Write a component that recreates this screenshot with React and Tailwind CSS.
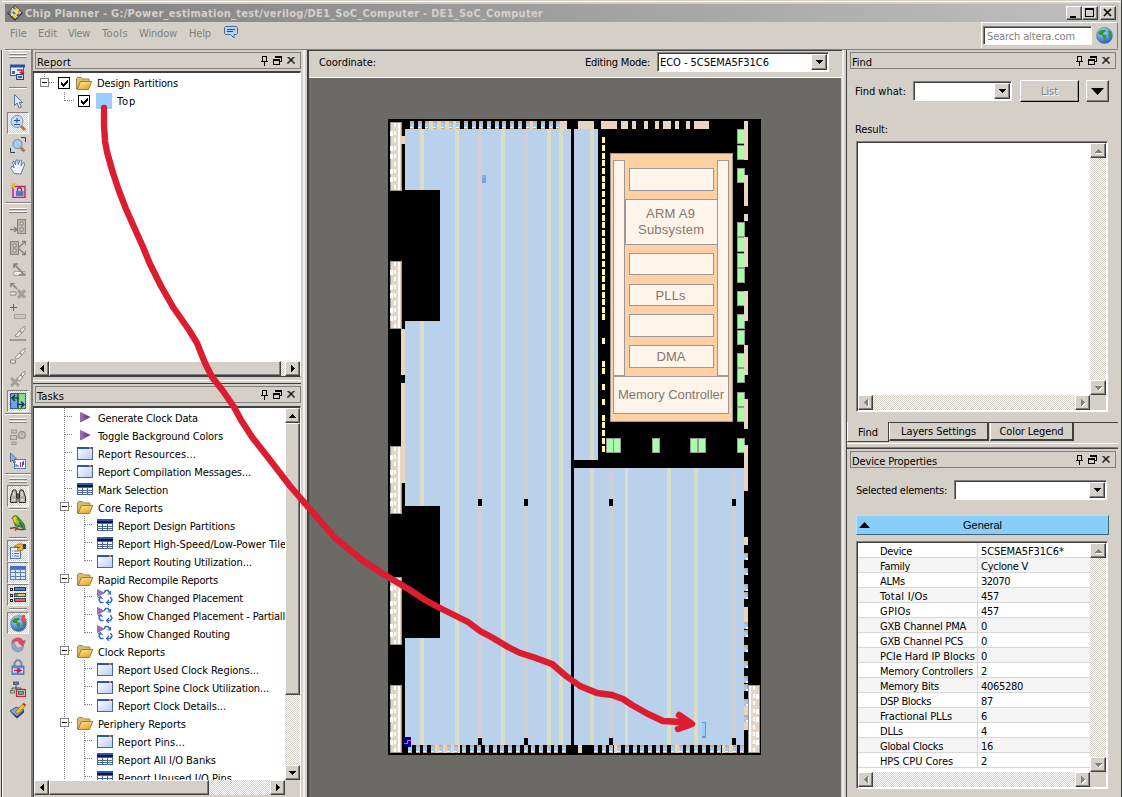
import React, { useLayoutEffect, useRef, useState } from "react";

/* Text run whose tracking is adjusted so that it spans w pixels. */
function Fit({ w, className = "", children }) {
  const ref = useRef(null);
  const [ls, setLs] = useState(0);
  useLayoutEffect(() => {
    const n = String(children).length;
    const natural = ref.current.getBoundingClientRect().width;
    if (w) setLs((w - natural) / n);
  }, [w, children]);
  return (
    <span ref={ref} className={"inline-block shrink-0 whitespace-pre " + className} style={{ letterSpacing: ls + "px" }}>
      {children}
    </span>
  );
}

const RAISED = "border border-t-white border-l-white border-r-[#404040] border-b-[#404040] shadow-[inset_-1px_-1px_#808080] bg-[#d4d0c8]";
const SUNKEN = "border border-t-[#808080] border-l-[#808080] border-r-white border-b-white";
const CHECKER = "bg-[repeating-conic-gradient(#ffffff_0_25%,#d4d0c8_0_50%)] bg-[length:2px_2px]";

function Arrow({ dir, off }) {
  const d = { up: "M0 4h7L3.5 0z", down: "M0 0h7L3.5 4z", left: "M4 0v7L0 3.5z", right: "M0 0v7l4-3.5z" }[dir];
  const v = dir === "up" || dir === "down";
  return (
    <svg width={v ? 7 : 4} height={v ? 4 : 7} className="overflow-visible" shapeRendering="crispEdges">
      {off && <path d={d} fill="#fff" transform="translate(1 1)" />}
      <path d={d} fill={off ? "#808080" : "#000"} />
    </svg>
  );
}

function SBtn({ dir, off, className = "" }) {
  return (
    <div className={"flex shrink-0 items-center justify-center w-[15px] h-[15px] " + RAISED + " " + className}>
      <Arrow dir={dir} off={off} />
    </div>
  );
}

function PanelTitle({ children, w, className = "" }) {
  return (
    <div className={"flex shrink-0 items-center h-[17px] border border-[#808080] pl-px pr-[5px] " + className}>
      <Fit w={w} className="pt-[3px]">{children}</Fit>
      <svg width="34" height="11" className="ml-auto" fill="none" stroke="#000" shapeRendering="crispEdges">
        <path d="M1.5 6V1.5h4V6M0 6.5h7M3.5 7v4" />
        <path d="M14.500 3V1.500h6v5H19M14 2h7M12.500 4.500h6v5h-6zM12 5h7" />
        <path d="M26.500 2l7 7M33.500 2l-7 7M27.500 2l6 6M32.500 2l-6 6" shapeRendering="auto" />
      </svg>
    </div>
  );
}

/* ---------- small icons ---------- */
const Folder = () => (
  <svg width="16" height="13" viewBox="0 0 16 13">
    <defs><linearGradient id="fo" x1="0" y1="0" x2=".6" y2="1"><stop offset="0" stopColor="#ffe9a0" /><stop offset="1" stopColor="#e8a828" /></linearGradient></defs>
    <path d="M.5 12V2l1-1.500h4L7 2h6v3" fill="#dcc068" stroke="#98875a" />
    <path d="M1 12.500L4.500 4.500H15.800L12.500 12.500z" fill="url(#fo)" stroke="#8a6a20" strokeWidth=".8" />
  </svg>
);
const Sheet = () => (
  <svg width="16" height="13" viewBox="0 0 16 13">
    <defs><linearGradient id="sh" x1="0" y1="0" x2="1" y2="1"><stop offset="0" stopColor="#fff" /><stop offset="1" stopColor="#b9cbf2" /></linearGradient></defs>
    <rect x=".5" y=".5" width="15" height="12" fill="url(#sh)" stroke="#4867a0" />
    <path d="M0 1h16" stroke="#2a55b8" strokeWidth="2" /><rect x="12" width="2" height="2" fill="#f07818" />
  </svg>
);
const Table = () => (
  <svg width="16" height="12" viewBox="0 0 16 12" shapeRendering="crispEdges">
    <rect width="16" height="12" fill="#4a6694" /><rect y="0" width="16" height="2" fill="#2858b8" /><rect y="2" width="16" height="2" fill="#101838" />
    <path d="M1 5h4v2H1zM6 5h4v2H6zM11 5h4v2h-4zM1 8h4v1H1zM6 8h4v1H6zM11 8h4v1h-4zM1 10h4v1H1zM6 10h4v1H6zM11 10h4v1h-4z" fill="#eef3ff" />
  </svg>
);
const Play = () => (
  <svg width="16" height="13" viewBox="0 0 16 13">
    <defs><linearGradient id="pl"><stop offset="0" stopColor="#b46ac4" /><stop offset="1" stopColor="#4a2870" /></linearGradient></defs>
    <path d="M3.500 1.500L13 6 3.500 11z" fill="url(#pl)" stroke="#70508a" strokeWidth=".7" />
  </svg>
);
const Recycle = () => (
  <svg width="16" height="16" viewBox="0 0 16 16" fill="none" stroke="#3868c8" strokeWidth="1.500">
    <path d="M7 4l1.500-2.500h2.500L13 4.500M13.500 8l1.500 3-1.500 2.500H10M6.500 13.500H3.500L2 11l1.500-3" />
    <path d="M10.500 5h3V2M12 11l-2.500 2.500L12 16M1 9l2.500-1.500L5.500 10" strokeWidth="1.200" />
    <path d="M.5.500L7 4 .5 7.500z" fill="#a070b8" stroke="#705088" strokeWidth=".6" />
  </svg>
);
const ICONS = { folder: Folder, sheet: Sheet, table: Table, play: Play, recycle: Recycle };

const Globe = () => (
  <svg width="17" height="17" viewBox="0 0 17 17">
    <defs><radialGradient id="gl" cx=".4" cy=".25" r=".8"><stop offset="0" stopColor="#c4dcfa" /><stop offset=".6" stopColor="#5e8ede" /><stop offset="1" stopColor="#2a4fa8" /></radialGradient></defs>
    <circle cx="8.500" cy="8.500" r="8" fill="url(#gl)" stroke="#5578b0" strokeWidth=".6" />
    <path d="M2 5.500l3-2.500 4-.5 1 2-2.500 1.500L7 8 3.500 8zM6 7.500h3.500l1 2-1.500 2.500-.5 2.500-1.500-3.500zM11.500 4l2-.5 2 3 .3 2.500-1.800 2-1.500-2.500.5-2z" fill="#2f9838" />
  </svg>
);

/* ---------- left tool bar ---------- */
const G = "#858279";
const tb = {
  report: <g><rect x=".5" y="2.500" width="13" height="9" fill="#e8eefc" stroke="#4060a0" /><path d="M0 2h15" stroke="#2850a8" strokeWidth="3" /><path d="M2 7h3v3H2z" fill="#606878" /><path d="M7 6h5v3M10 8l2 2 2-2" stroke="#d01850" strokeWidth="1.500" fill="none" /><rect x="6.500" y="10.500" width="7" height="5" fill="#c8d8f8" stroke="#304880" /><path d="M8 13h4" stroke="#506080" strokeWidth="2" /></g>,
  cursor: <path d="M4.500 1.500v11l2.500-2.500 2.200 5 2.300-1-2.300-4.500h3.500z" fill="#dce8fc" stroke="#5872a0" />,
  zoom: <g><path d="M10.500 10.500l4.500 4.500" stroke="#b87830" strokeWidth="3" /><circle cx="7" cy="6.500" r="6" fill="#c4dcf8" stroke="#7890b8" /><path d="M4 5.500h6M7 3v5M4 9.500h6" stroke="#284880" /></g>,
  fit: <g><path d="M10.500 10.500l4 4" stroke="#b87830" strokeWidth="3" /><circle cx="7.500" cy="7" r="4.500" fill="#a8ccf4" stroke="#6888b0" /><path d="M11 .5h4.500V5M5 15.500H.5V11" stroke="#304060" fill="none" /></g>,
  hand: <path d="M4 14.500L1 9.500l.5-2 1.500 0 1.200 1.500L2.500 3l1.500-.8L5.500 6 6 1l1.800 0L8.200 5.500 10 1l1.600.6L11 7l2.500-3.500 1.500 1L12.500 11l-1.500 4z" fill="#f4f8ff" stroke="#5c7cb0" />,
  lock: <g><rect x="3" y="4.500" width="12" height="11" fill="#d8c8e4" stroke="#d02060" strokeWidth="1.500" /><path d="M7.500 9V7q2-2.500 4 0v2" fill="none" stroke="#4050a0" strokeWidth="1.300" /><rect x="6" y="9" width="7.500" height="5" fill="#5878c0" /><path d="M7 11.500h5" stroke="#e83060" /><path d="M3.500 0v7M0 3.500h7M1 1l5 5M6 1L1 6" stroke="#f0b810" /></g>,
  g1: <g stroke={G} fill="#e8e5de"><rect x="7.500" y=".5" width="8" height="14" fill="#bdb9b0" /><path d="M10 3h3v3h-3zM10 9h3v3h-3z" /><path d="M0 10.500h7M4 8l3 2.500L4 13" fill="none" strokeWidth="1.500" /></g>,
  g2: <g stroke={G} fill="#e8e5de"><rect x=".5" y="1.500" width="8" height="13" fill="#bdb9b0" /><path d="M3 4h3v3H3zM3 9h3v3H3z" /><path d="M9 7l6-5M9 9l6 5M12 1.500h3.500V5M12 14.500h3.500V11" fill="none" strokeWidth="1.300" /></g>,
  g3: <g><path d="M4 10.500h11v4H4z" fill="#f0eee8" stroke="#a4a198" /><path d="M4 3l10 10.500H9M4 7V3h4" stroke={G} strokeWidth="1.700" fill="none" /></g>,
  g4: <g><path d="M0 9h6v3H0z" fill="#f0eee8" stroke={G} /><path d="M1 0l6 6M1 4V0h4" stroke={G} strokeWidth="1.500" fill="none" /><path d="M8 7l7 8M15 7l-7 8" stroke="#a4a198" strokeWidth="3" /></g>,
  g5: <g><path d="M3.500 0v7M0 3.500h7" stroke="#66645e" /><path d="M4.500 10.500h11v4h-11z" fill="#c9c6be" stroke="#a4a198" /></g>,
  g6: <g><path d="M0 14h16" stroke={G} strokeWidth="2" /><path d="M1 14h14" stroke="#d8d4cc" strokeWidth=".6" /><path d="M5 10l4-5 3 2-4 4zM10 4l5-4v3l-3 4z" fill="#e8e5de" stroke={G} strokeWidth=".8" /></g>,
  g7: <g><path d="M.5 12h5v3h-5z" fill="#eee" stroke={G} /><path d="M5 10l4-5 3 2-4 4zM10 4l5-4v3l-3 4z" fill="#e8e5de" stroke={G} strokeWidth=".8" /></g>,
  g8: <g><path d="M1 7l8 8M9 7l-8 8" stroke="#a4a198" strokeWidth="3" /><path d="M7 8l3-4 3 2-3 4zM11 3l4-3v3l-3 3z" fill="#e8e5de" stroke={G} strokeWidth=".8" /></g>,
  swap: <g><rect x=".5" y=".5" width="7" height="15" fill="#70a0e8" stroke="#305898" /><rect x="8.500" y=".5" width="7" height="15" fill="#90d890" stroke="#308038" /><path d="M9 5H3M5 2L2 5l3 3" stroke="#105018" strokeWidth="1.500" fill="none" /><path d="M7 11.500h6M11 8.500l3 3-3 3" stroke="#102888" strokeWidth="1.500" fill="none" /></g>,
  clk: <g fill="#c8c4bc" stroke="#9a978e"><rect x="1.500" y="1" width="5" height="3" /><rect x=".5" y="6.500" width="6" height="4" /><rect x="2" y="13" width="4" height="2.500" /><path d="M7 8.500h2" /><circle cx="12" cy="6" r="3.500" strokeWidth="1.500" /><path d="M12 4v2.500" /></g>,
  chart: <g><rect x="4.500" y="6.500" width="11" height="9" fill="#f4f8ff" stroke="#5878b0" /><path d="M6 14v-3M8 14v-2M12.500 14V9" stroke="#2858c0" /><path d="M7 13v-1M10.500 14V9M13.500 12V8" stroke="#d02858" /><path d="M.5 0v9l2-2 1.500 3 1.500-.8L4 6.500h3z" fill="#90b0dc" stroke="#385888" strokeWidth=".8" /></g>,
  bino: <g fill="#b0b0ac" stroke="#303030"><path d="M3 2h3l1 5v7.500H.5V9z" /><path d="M10 2h3l2.500 7v5.500H9V7z" /><path d="M6.500 6h3v4h-3z" fill="#606060" /><path d="M2 12h3M11 12h3M4 4v4M12 4v4" stroke="#eee" /></g>,
  bird: <g><path d="M3 1.500l3-1 3 2.500 5 6 1.500 6-5-3-5-1-2-5z" fill="#48982c" stroke="#285810" strokeWidth=".7" /><path d="M3 3l2-2 2 2-1 5-2-1z" fill="#f0c820" /><path d="M7 4l3 4-2 2-3-2z" fill="#8cc83c" /><path d="M1 3.500l2-1v2z" fill="#c04818" /><path d="M0 13.500l5-1 4 2h5M5 15.500l3-3" stroke="#7a4424" strokeWidth="1.500" fill="none" /><path d="M9 7l4 5" stroke="#204888" /></g>,
  prop: <g><rect x=".5" y="4.500" width="10" height="11" fill="#eaf2ff" stroke="#5878b0" /><path d="M2 8h1M4 8h5M2 10.500h1M4 10.500h5M2 13h1M4 13h5" stroke="#4870c0" /><path d="M4 3.500L8 1h5v6L9 8 7 6l3-2z" fill="#f0b830" stroke="#8a6010" strokeWidth=".7" /><rect x="13" y="1" width="3" height="5" fill="#203c98" /></g>,
  grid: <g shapeRendering="crispEdges"><rect y="1" width="16" height="14" fill="#6080b0" /><rect y="1" width="16" height="3" fill="#4870c0" /><path d="M1 5h4v2H1zM6 5h4v2H6zM11 5h4v2h-4zM1 8h4v3H1zM6 8h4v3H6zM11 8h4v3h-4zM1 12h4v2H1zM6 12h4v2H6zM11 12h4v2h-4z" fill="#dce8fc" /></g>,
  legend: <g shapeRendering="crispEdges"><path d="M0 1h3v3H0zM0 7h3v3H0zM0 12h3v3H0z" fill="#202020" /><path d="M1 2h1v1H1zM1 8h1v1H1zM1 13h1v1H1z" fill="#fff" /><rect x="4.500" y=".5" width="11" height="3" fill="#5080d8" stroke="#183878" /><rect x="4.500" y="6.500" width="11" height="3" fill="#e8d040" stroke="#404860" /><rect x="4.500" y="11.500" width="11" height="3" fill="#f05868" stroke="#404860" /><path d="M5 8h3" stroke="#48a848" strokeWidth="2" /></g>,
  swirl: <g><path d="M1.500 7Q2 .8 8.500.8 12 1 13 4l2.500-.5-2.500 6L8 5.500l2.200-.4Q7.500 3 5 4.500 2.500 5 1.500 7z" fill="#e04868" stroke="#b03050" strokeWidth=".4" /><path d="M2 6.500Q3 4.500 4.500 6q.5 4 4 5 3.500-.5 5-2Q13 14.800 7.500 15 1 14 2 6.500z" fill="#90a8c8" stroke="#6078a0" strokeWidth=".5" /></g>,
  padlock: <g><path d="M4.500 7V4q3.500-6 7 0v3" stroke="#7088b0" strokeWidth="2" fill="none" /><rect x="2" y="7" width="12" height="9" fill="#6c90d8" stroke="#405c98" strokeWidth=".7" /><rect x="3" y="9.500" width="10" height="4" fill="#f8e8f0" /><path d="M4 11.500h5M7 9.500l4 2-4 2" stroke="#c81848" strokeWidth="1.500" fill="none" /></g>,
  tree: <g><path d="M6 4v5M2 7h9M2 7v2M11 7v2" stroke="#405070" fill="none" /><rect x="3.500" y="1" width="5" height="2.500" fill="#5080c0" stroke="#304870" strokeWidth=".7" /><rect x=".5" y="9.500" width="4" height="2.500" fill="#c8d060" stroke="#506040" strokeWidth=".7" /><rect x="6.500" y="8.500" width="9" height="7" fill="none" stroke="#d81840" strokeWidth="1.300" /><rect x="8.500" y="10.500" width="5" height="3" fill="#68b068" stroke="#305838" strokeWidth=".7" /></g>,
  edit: <g><path d="M0 9l7 6.500 7-6V7L7 13z" fill="#28406c" /><path d="M0 8l6-4 8 3-7 6.500z" fill="#7ca4dc" stroke="#284878" strokeWidth=".8" /><path d="M6 8.500L13 .5l2.500 2L9 10l-3 .5z" fill="#f8c020" stroke="#a06810" strokeWidth=".7" /><path d="M13 .5l2.500 2" stroke="#d82840" strokeWidth="2" /></g>,
};

const TOOLS = [
  ["h-[7px]", "grip"], ["h-[26px]", "report"], ["h-[5px]", "sep"], ["h-[22px]", "cursor"], ["h-[22px]", "zoom", 1], ["h-[22px]", "fit"], ["h-[22px]", "hand"], ["h-[23px]", "lock"],
  ["h-[3px]", "end"], ["h-[12px]", "grip"], ["h-[21px]", "g1"], ["h-[21px]", "g2"], ["h-[22px]", "g3"], ["h-[21px]", "g4"], ["h-[22px]", "g5"], ["h-[22px]", "g6"], ["h-[22px]", "g7"], ["h-[23px]", "g8"], ["h-[22px]", "swap", 1],
  ["h-[3px]", "end"], ["h-[10px]", "grip"], ["h-[24px]", "clk"], ["h-[23px]", "chart"], ["h-[3px]", "end"], ["h-[10px]", "grip"], ["h-[22px]", "bino", 1], ["h-[4px]", "sep"],
  ["h-[24px]", "bird"], ["h-[5px]", "sep"], ["h-[22px]", "prop", 1], ["h-[22px]", "grid", 1], ["h-[22px]", "legend", 1], ["h-[6px]", "sep"], ["h-[22px]", "globe", 1],
  ["h-[22px]", "swirl"], ["h-[22px]", "padlock"], ["h-[22px]", "tree"], ["h-[22px]", "edit"],
];

function Tool({ h, kind, on }) {
  if (kind === "grip")
    return (
      <div className={"flex shrink-0 flex-col justify-center gap-[1px] pl-[4px] pr-[4px] " + h}>
        <div className="h-[2px] border-t border-t-white border-b border-b-[#808080]" />
        <div className="h-[2px] border-t border-t-white border-b border-b-[#808080]" />
      </div>
    );
  if (kind === "sep")
    return <div className={"flex shrink-0 items-center px-[4px] " + h}><div className="h-[2px] w-full border-t border-t-[#808080] border-b border-b-white" /></div>;
  if (kind === "end")
    return <div className={"flex shrink-0 items-center " + h}><div className="h-[2px] w-full border-t border-t-[#808080] border-b border-b-white" /></div>;
  return (
    <div className={"flex shrink-0 items-center justify-center mx-[2px] " + h + (on ? " " + SUNKEN + " " + CHECKER : "")}>
      {kind === "globe" ? (
        <div className="relative"><Globe /><svg width="7" height="8" className="absolute right-0 top-0"><path d="M2 0h3v4h2L3.500 8 0 4h2z" fill="#e84858" /></svg></div>
      ) : (
        <svg width="16" height="16" viewBox="0 0 16 16">{tb[kind]}</svg>
      )}
    </div>
  );
}

/* ---------- tasks tree ---------- */
const TASKS = [
  [0, "play", "Generate Clock Data", 100], [0, "play", "Toggle Background Colors", 125], [0, "sheet", "Report Resources...", 98], [0, "sheet", "Report Compilation Messages...", 153], [0, "table", "Mark Selection", 70],
  [0, "folder", "Core Reports", 65], [1, "table", "Report Design Partitions", 117], [1, "table", "Report High-Speed/Low-Power Tile", 168], [1, "sheet", "Report Routing Utilization...", 134, 1],
  [0, "folder", "Rapid Recompile Reports", 120], [1, "recycle", "Show Changed Placement", 125], [1, "recycle", "Show Changed Placement - Partiall", 167], [1, "recycle", "Show Changed Routing", 112, 1],
  [0, "folder", "Clock Reports", 67], [1, "sheet", "Report Used Clock Regions...", 141], [1, "sheet", "Report Spine Clock Utilization...", 151], [1, "sheet", "Report Clock Details...", 108, 1],
  [0, "folder", "Periphery Reports", 88], [1, "sheet", "Report Pins...", 67], [1, "table", "Report All I/O Banks", 98], [1, "table", "Report Unused I/O Pins", 114],
];

function TaskRow({ lvl, icon, label, w, last }) {
  const Icon = ICONS[icon];
  const folder = icon === "folder";
  return (
    <div className="flex h-[18px] shrink-0 items-center pl-px">
      <svg width={lvl ? 62 : 42} height="18" className="shrink-0" shapeRendering="crispEdges" fill="none" stroke="#808080">
        <path d="M29.500 0v18" strokeDasharray="1 1" />
        {lvl === 0 && <path d="M30 8.500h8" strokeDasharray="1 1" />}
        {lvl === 1 && <path d={last ? "M49.500 0v9M50 8.500h8" : "M49.500 0v18M50 8.500h8"} strokeDasharray="1 1" />}
        {folder && <><rect x="25.500" y="4.500" width="8" height="8" fill="#fff" /><path d="M27 8.500h5" stroke="#000" /></>}
      </svg>
      <div className="flex w-[21px] shrink-0 items-center"><Icon /></div>
      <Fit w={w} className="pt-[2px]">{label}</Fit>
    </div>
  );
}

const Check = () => (
  <svg width="12" height="12" shapeRendering="crispEdges"><rect x=".5" y=".5" width="11" height="11" fill="#fff" stroke="#000" /><path d="M3 5v3l2 2 5-5V2L5 7z" fill="#000" /></svg>
);

/* ---------- device floorplan ---------- */
const BLUE = "#bad1eb", BEIGE = "#e6d5c1", YEL = "#d8dfc6", PNK = "#d1cdd7";

function IoColumn({ x, y, h, flip }) {
  const marks = [];
  for (let i = 0; i * 7.700 < h - 5; i++) {
    const yy = Math.round(y + 1 + i * 7.700);
    marks.push(<rect key={"a" + i} x={flip ? x + 5 : x + 4} y={yy} width="2" height="4" fill="#fff" />);
    if (i > 0 && i % 3 !== 2) marks.push(<rect key={"b" + i} x={flip ? x + 8 : x} y={yy} width="3" height="5" fill="#fff" />);
  }
  return (
    <g>
      <rect x={x + 0.5} y={y + 0.5} width="11" height={h - 1} fill={BEIGE} stroke="#999" />
      {marks}
      <rect x={flip ? x + 1 : x + 8} y={y + 1} width="2" height={h - 2} fill="#fff" />
    </g>
  );
}

function Pad({ x, y, v }) {
  return v ? (
    <g><rect x={x} y={y} width="4" height="7" fill="#d0ac80" /><rect x={x} y={y + 2} width="3" height="4" fill="#99ccff" /><rect x={x + 2} y={y + 5} width="2" height="2" fill="#fff" /></g>
  ) : (
    <g><rect x={x} y={y} width="4" height="8" fill="#d0ac80" /><rect x={x} y={y + 6} width="3" height="1" fill="#fff" /><rect x={x} y={y + 2} width="4" height="4" fill="#99ccff" /></g>
  );
}

const seq = (a, step, n) => Array.from({ length: n }, (_, i) => Math.round(a + i * step));
const GREEN_Y = [129, 145, 168, 222, 237, 253, 268, 291, 314, 330, 353, 368, 392, 407, 438];
const DASH_Y = [137, 145, 153, 160, 168, 176, 183, 191, 199, 207, 215, 222, 230, 238, 245, 253, 261, 269, 276, 284, 292, 299, 307, 314, 338, 361, 368, 384, 399, 415, 422, 430, 438, 446];

function Chip() {
  return (
    <svg width="373" height="636" viewBox="388 119 373 636" shapeRendering="crispEdges" className="block">
      <rect x="388" y="119" width="373" height="636" fill="#000" />
      <g fill={BLUE}><rect x="405" y="129" width="166" height="616" /><rect x="574" y="129" width="24" height="331" /><rect x="574" y="468" width="170" height="277" /></g>
      {[420, 455, 501, 547, 559].map((x) => <rect key={x} x={x} y="129" width="4" height="616" fill={YEL} />)}
      {[478, 524].map((x) => <rect key={x} x={x} y="129" width="4" height="616" fill={PNK} />)}
      <rect x="590" y="129" width="4" height="331" fill={YEL} />
      <rect x="590" y="468" width="4" height="277" fill={YEL} /><rect x="625" y="468" width="3" height="277" fill={YEL} /><rect x="667" y="468" width="4" height="277" fill={YEL} /><rect x="694" y="468" width="4" height="277" fill={YEL} />
      <rect x="609" y="468" width="4" height="277" fill={PNK} /><rect x="732" y="468" width="4" height="277" fill={PNK} />
      {[478, 524, 609, 732].map((x) => <g key={x}><rect x={x} y="499" width="4" height="7" /><rect x={x} y="738" width="4" height="7" /></g>)}
      <rect x="388" y="190" width="52" height="131" /><rect x="388" y="506" width="52" height="132" />
      <IoColumn x={390} y={122} h={69} /><IoColumn x={390} y={261} h={68} /><IoColumn x={390} y={446} h={68} /><IoColumn x={390} y={577} h={68} /><IoColumn x={390} y={685} h={68} /><IoColumn x={748} y={685} h={68} flip />
      <g fill={BEIGE}>
        <rect x="401" y="136" width="4" height="8" /><rect x="401" y="329" width="4" height="46" /><rect x="401" y="383" width="4" height="100" />
        <rect x="425" y="121" width="33" height="8" /><rect x="526" y="121" width="10" height="8" /><rect x="556" y="121" width="11" height="8" />
        {[[578, 16], [601, 16], [621, 7], [632, 4], [644, 4], [655, 4], [663, 8], [675, 4], [686, 4], [694, 15]].map(([x, w]) => <rect key={x} x={x} y="121" width={w} height="8" />)}
        <rect x="432" y="745" width="28" height="8" /><rect x="578" y="745" width="4" height="8" /><rect x="614" y="745" width="6" height="8" /><rect x="672" y="745" width="7" height="8" /><rect x="722" y="745" width="11" height="8" />
        {[[214, 7], [537, 8], [607, 16], [699, 31]].map(([y, h]) => <rect key={y} x="744" y={y} width="4" height={h} />)}
      </g>
      {seq(410, 7.700, 20).map((x) => <Pad key={x} x={x} y={121} />)}
      {seq(408, 7.700, 21).map((x) => <Pad key={x} x={x} y={745} />)}
      {seq(594, 7.700, 20).map((x) => <Pad key={x} x={x} y={745} />)}
      {[553, 568, 584, 592, 622, 630, 645, 661, 676, 684, 699, 715].map((y) => <Pad key={y} x={744} y={y} v />)}
      {DASH_Y.map((y) => <rect key={y} x="602" y={y} width="3" height="6" fill="#ffff99" />)}
      <g fill="#a6ffa6" stroke="#999">
        {GREEN_Y.map((y) => <rect key={y} x="737.500" y={y + 0.5} width="7" height="14" />)}
        {[606, 613, 652, 690, 698].map((x) => <rect key={x} x={x + 0.5} y="438.500" width="7" height="14" />)}
      </g>
      <g fill={BEIGE}>{[[121, 39], [175, 31], [237, 30], [291, 30], [345, 30], [399, 30], [445, 46]].map(([y, h]) => <rect key={y} x="744" y={y} width="4" height={h} />)}</g>
      <g fill="#fff4ea" stroke="#999">
        <rect x="610.500" y="153.500" width="122" height="268" fill="#ffd0a3" />
        <rect x="613.500" y="160.500" width="11" height="215" /><rect x="717.500" y="160.500" width="11" height="215" />
        {[[168, 22], [253, 21], [284, 21], [314, 22], [345, 22]].map(([y, h]) => <rect key={y} x="629.500" y={y + 0.5} width="84" height={h} />)}
        <rect x="625.500" y="199.500" width="92" height="45" /><rect x="613.500" y="376.500" width="115" height="37" />
      </g>
      <g fill="#84776f" textAnchor="middle" className="font-['Liberation_Sans',sans-serif] text-[13px]">
        <text x="670.500" y="218" textLength="49">ARM A9</text><text x="671" y="234" textLength="66">Subsystem</text>
        <text x="670.500" y="300" textLength="30">PLLs</text><text x="671" y="361" textLength="29">DMA</text><text x="671" y="399" textLength="106">Memory Controller</text>
      </g>
      <rect x="482" y="175" width="4" height="8" fill="#77a8dc" /><rect x="482" y="175" width="3" height="3" fill="#8ab8ee" />
      <rect x="702" y="722" width="4" height="16" fill="#6699cc" /><rect x="702" y="723" width="3" height="13" fill="#99ccff" />
      <rect x="404" y="737" width="7" height="10" fill="#000080" /><path d="M404 743.500h3.500v-3h3.500" stroke="#ff30ff" fill="none" />
    </svg>
  );
}

const PROPS = [
  ["Device", 32, "5CSEMA5F31C6*", 83], ["Family", 30, "Cyclone V", 47], ["ALMs", 25, "32070", 29], ["Total I/Os", 48, "457", 18], ["GPIOs", 31, "457", 18], ["GXB Channel PMA", 86, "0", 6], ["GXB Channel PCS", 83, "0", 6], ["PCIe Hard IP Blocks", 95, "0", 6],
  ["Memory Controllers", 93, "2", 6], ["Memory Bits", 59, "4065280", 42], ["DSP Blocks", 51, "87", 12], ["Fractional PLLs", 72, "6", 6], ["DLLs", 23, "4", 6], ["Global Clocks", 63, "16", 12], ["HPS CPU Cores", 73, "2", 6],
];

function Combo({ className, children }) {
  return (
    <div className={"flex shrink-0 items-stretch bg-white " + SUNKEN + " shadow-[inset_1px_1px_#404040] p-px pr-px " + className}>
      <div className="flex flex-1 items-center pl-[1px]">{children}</div>
      <div className={"flex w-[16px] shrink-0 items-center justify-center " + RAISED}><Arrow dir="down" /></div>
    </div>
  );
}

export default function App() {
  return (
    <div className="relative flex h-[797px] w-[1122px] flex-col overflow-hidden bg-[#d4d0c8] font-['DejaVu_Sans_Condensed','DejaVu_Sans',sans-serif] text-[11px] leading-[13px] text-black [font-stretch:condensed] border-r border-r-[#404040]">
      <div className="h-[4px] shrink-0 pt-px"><div className="ml-[2px] h-px bg-white" /></div>

      {/* title bar */}
      <div className="ml-[5px] mr-[3px] flex h-[18px] shrink-0 items-center bg-linear-to-r from-[#808080] to-[#c0c0c0] pl-[2px] pr-[2px]">
        <svg width="16" height="16" viewBox="0 0 16 16"><path d="M8 0l8 8-8 8-8-8z" fill="#283c68" /><path d="M8 1l6.500 6.500L8 14 1.500 7.500z" fill="#f8c830" /><path d="M3 6l8 6M5 3l7 7M12 4L4 11" stroke="#fff0a0" /><path d="M6 2l2 2M2 6l2 2M10 11l2-2M12 5l1 1M6 7l2 2" stroke="#3868c0" strokeWidth="2" /></svg>
        <Fit w={518} className="ml-[2px] font-bold text-[#d4d0c8]">Chip Planner - G:/Power_estimation_test/verilog/DE1_SoC_Computer - DE1_SoC_Computer</Fit>
        <div className="ml-auto flex h-[14px] shrink-0">
          <div className={"w-[16px] " + RAISED}><svg width="14" height="12"><path d="M3 9.500h6" stroke="#000" strokeWidth="2" shapeRendering="crispEdges" /></svg></div>
          <div className={"w-[16px] " + RAISED}><svg width="14" height="12" shapeRendering="crispEdges"><path d="M2.500 1.500h8v8h-8zM2 2.500h9" stroke="#000" fill="none" /></svg></div>
          <div className={"ml-[2px] w-[16px] " + RAISED}><svg width="14" height="12"><path d="M3 2l7 7M10 2L3 9" stroke="#000" strokeWidth="1.700" /></svg></div>
        </div>
      </div>

      {/* menu bar */}
      <div className="ml-[5px] mr-[3px] flex h-[28px] shrink-0 items-start border-b border-b-[#808080] pl-[5px] text-[#808080]">
        <div className="flex pt-[5px]">
          <Fit w={17}>File</Fit><Fit w={19} className="ml-[11px]">Edit</Fit><Fit w={22} className="ml-[11px]">View</Fit><Fit w={26} className="ml-[12px]">Tools</Fit><Fit w={38} className="ml-[11px]">Window</Fit><Fit w={22} className="ml-[12px]">Help</Fit>
        </div>
        <svg width="14" height="13" className="ml-[13px] mt-[4px]"><path d="M1.500.5h11l1 1v6l-1 1H10V12L6.500 8.500h-5l-1-1v-6z" fill="#b8d0f4" stroke="#486c98" /><path d="M3 3.500h8M3 5.500h6" stroke="#304870" /></svg>
        <div className="ml-auto flex h-[27px] w-[137px] items-center border border-l-white border-t-white border-r-[#808080] border-b-[#d4d0c8] pl-[1px]">
          <div className={"flex h-[19px] w-[109px] items-center bg-white pl-[3px] shadow-[inset_1px_1px_#404040] " + SUNKEN}><Fit w={88} className="pt-[2px]">Search altera.com</Fit></div>
          <div className="ml-[4px]"><Globe /></div>
        </div>
      </div>

      <div className="flex min-h-0 flex-1 pl-[1px]">
        <div className="mr-[1px] w-px shrink-0 bg-[#404040] shadow-[1px_0_#ffffff]" />

        {/* tool bar */}
        <div className="ml-[2px] flex w-[26px] shrink-0 flex-col border-t border-t-white pt-[1px]">
          {TOOLS.map(([h, kind, on], i) => <Tool key={i} h={h} kind={kind} on={on} />)}
        </div>
        <div className="w-[2px] shrink-0 bg-[#808080]" />

        {/* report and tasks column */}
        <div className="flex w-[268px] shrink-0 flex-col">
          <PanelTitle w={34} className="ml-[2px] mt-[2px]">Report</PanelTitle>
          <div className="mt-[2px] flex h-[306px] shrink-0 flex-col border-t-2 border-t-[#404040] border-l border-l-[#404040] border-r border-r-white border-b border-b-[#404040] bg-white">
            <div className="flex h-[19px] items-center pt-px">
              <svg width="30" height="18" className="shrink-0" shapeRendering="crispEdges" fill="none" stroke="#808080"><path d="M10.500 0v5M15 8.500h5" strokeDasharray="1 1" /><rect x="6.500" y="4.500" width="8" height="8" fill="#fff" /><path d="M8 8.500h5" stroke="#000" /></svg>
              <div className="-ml-[6px]"><Check /></div><div className="ml-[6px] mr-[5px]"><Folder /></div><Fit w={81} className="pt-px">Design Partitions</Fit>
            </div>
            <div className="flex h-[18px] items-center">
              <svg width="44" height="18" className="shrink-0" shapeRendering="crispEdges" fill="none" stroke="#808080"><path d="M30.500 0v9M31 8.500h9" strokeDasharray="1 1" /></svg>
              <div><Check /></div><div className="ml-[6px] mr-[5px] h-[16px] w-[16px] bg-[#99ccff]" /><Fit w={19}>Top</Fit>
            </div>
            <div className="mt-auto flex h-[15px] bg-[#d4d0c8]">
              <SBtn dir="left" /><div className={"w-[232px] " + RAISED} /><div className={"flex-1 " + CHECKER} /><SBtn dir="right" />
            </div>
          </div>
          <div className="mt-[3px] h-px shrink-0 bg-white" />
          <div className="mt-[2px] h-px shrink-0 bg-[#404040]" />
          <PanelTitle w={27} className="ml-[2px] mt-[2px]">Tasks</PanelTitle>
          <div className="mt-[3px] flex min-h-0 flex-1 flex-col border-t-2 border-t-[#404040] border-l border-l-[#404040] border-r border-r-white bg-white">
            <div className="flex h-[372px] shrink-0">
              <div className="flex min-w-0 flex-1 flex-col overflow-hidden">
                {TASKS.map(([lvl, icon, label, w, last]) => <TaskRow key={label} lvl={lvl} icon={icon} label={label} w={w} last={last} />)}
              </div>
              <div className="flex w-[15px] shrink-0 flex-col">
                <SBtn dir="up" /><div className={"h-[272px] " + RAISED} /><div className={"flex-1 " + CHECKER} /><SBtn dir="down" />
              </div>
            </div>
            <div className="flex h-[15px] shrink-0 bg-[#d4d0c8]"><SBtn dir="left" /><div className={"w-[160px] " + RAISED} /><div className={"flex-1 " + CHECKER} /><SBtn dir="right" className="mr-[15px]" /></div>
            <div className="flex-1 bg-[#d4d0c8]" />
          </div>
        </div>
        <div className="ml-[2px] mr-[2px] w-[2px] shrink-0 bg-white/70" />

        {/* floorplan view */}
        <div className="flex w-[535px] shrink-0 flex-col border-l-2 border-l-[#404040] border-t border-t-[#404040]">
          <div className="flex h-[27px] shrink-0 items-center border-b border-b-white pl-[10px]">
            <Fit w={57} className="-mt-[3px]">Coordinate:</Fit>
            <Fit w={65} className="-mt-[3px] ml-[209px]">Editing Mode:</Fit>
            <Combo className="ml-[7px] -mt-[5px] h-[20px] w-[172px]"><Fit w={109} className="pt-[2px]">ECO - 5CSEMA5F31C6</Fit></Combo>
          </div>
          <div className="mr-px flex-1 bg-[#6b6a66] pl-[79px] pt-[41px]"><Chip /></div>
        </div>
        <div className="w-[2px] shrink-0 bg-white/60" />
        <div className="ml-[2px] w-px shrink-0 bg-[#404040]" />

        {/* find and properties column */}
        <div className="flex w-[271px] shrink-0 flex-col">
          <PanelTitle w={20} className="ml-[3px] mr-[2px] mt-[2px]">Find</PanelTitle>
          <div className="mt-[10px] flex h-[24px] shrink-0 items-center pl-[8px]">
            <Fit w={51} className="pt-px">Find what:</Fit>
            <Combo className="ml-[7px] h-[20px] w-[99px]" />
            <div className="ml-[8px] flex h-[22px] w-[59px] items-center justify-center border border-t-white border-l-white border-r-black border-b-black text-[#808080] shadow-[inset_-1px_-1px_#a0a0a0]"><Fit w={17} className="pt-px [text-shadow:1px_1px_#fff]">List</Fit></div>
            <div className={"ml-[7px] flex h-[22px] w-[23px] items-center justify-center " + RAISED}><svg width="13" height="7"><path d="M0 0h13L6.500 7z" /></svg></div>
          </div>
          <Fit w={33} className="ml-[8px] mt-[20px] self-start">Result:</Fit>
          <div className={"ml-[9px] mt-[5px] flex h-[271px] w-[252px] shrink-0 flex-col bg-white p-px shadow-[inset_1px_1px_#404040] " + SUNKEN}>
            <div className="flex min-h-0 flex-1">
              <div className="flex-1" />
              <div className="flex w-[16px] flex-col"><SBtn dir="up" off className="w-[16px]" /><div className={"flex-1 " + CHECKER} /><SBtn dir="down" off className="w-[16px]" /></div>
            </div>
            <div className="flex h-[15px] shrink-0 bg-[#d4d0c8]"><SBtn dir="left" off /><div className={"flex-1 " + CHECKER} /><SBtn dir="right" off className="mr-[16px]" /></div>
          </div>
          <div className="mt-[10px] flex h-[20px] shrink-0 items-start">
            <div className="flex h-[20px] w-[42px] items-center justify-center border-r border-r-[#404040] border-b border-b-[#404040] border-l border-l-white"><Fit w={20} className="pt-[2px]">Find</Fit></div>
            <div className="flex flex-1 border-t border-t-[#404040]">
              <div className="flex h-[18px] w-[100px] items-center justify-center border-r-2 border-r-[#404040] border-b-2 border-b-[#404040] border-l border-l-white"><Fit w={75}>Layers Settings</Fit></div>
              <div className="ml-px flex h-[18px] w-[84px] items-center justify-center border-r-2 border-r-[#404040] border-b-2 border-b-[#404040] border-l border-l-white"><Fit w={64}>Color Legend</Fit></div>
            </div>
          </div>
          <div className="mt-px h-px shrink-0 bg-white" />
          <div className="mt-[3px] h-[2px] shrink-0 border-t border-t-[#808080] bg-[#404040]" />
          <PanelTitle w={85} className="ml-[3px] mr-[2px] mt-[2px]">Device Properties</PanelTitle>
          <div className="mt-[12px] flex h-[20px] shrink-0 items-center pl-[9px]">
            <Fit w={91}>Selected elements:</Fit>
            <Combo className="ml-[7px] h-[20px] w-[153px]" />
          </div>
          <div className="ml-[9px] mt-[15px] flex h-[20px] w-[253px] shrink-0 items-center border border-t-[#b4e0fc] border-l-[#b4e0fc] border-r-[#3c6280] border-b-[#3c6280] bg-[#87cefa] pl-[2px]">
            <svg width="11" height="6"><path d="M0 6h11L5.500 0z" /></svg>
            <Fit w={39} className="ml-[93px] font-['Liberation_Sans',sans-serif]">General</Fit>
          </div>
          <div className={"ml-[9px] mt-[6px] flex h-[248px] w-[252px] shrink-0 flex-col bg-white p-px shadow-[inset_1px_1px_#404040] " + SUNKEN}>
            <div className="flex min-h-0 flex-1">
              <div className="flex min-w-0 flex-1 flex-col">
                {PROPS.map(([k, kw, v, vw], i) => (
                  <div key={k} className={"flex h-[15px] shrink-0 items-center border-b border-b-[#d8d8d8] " + (i % 2 ? "bg-[#f5f5f5]" : "bg-white")}>
                    <div className="flex h-full w-[120px] shrink-0 items-center border-r border-r-[#d8d8d8] pl-[22px]"><Fit w={kw} className="pt-[3px]">{k}</Fit></div>
                    <Fit w={vw} className="ml-[3px] pt-[3px]">{v}</Fit>
                  </div>
                ))}
              </div>
              <div className="flex w-[16px] flex-col"><SBtn dir="up" off className="w-[16px]" /><div className={"flex-1 " + CHECKER} /><SBtn dir="down" off className="w-[16px]" /></div>
            </div>
            <div className="flex h-[15px] shrink-0 bg-[#d4d0c8]"><SBtn dir="left" off /><div className={"flex-1 " + CHECKER} /><SBtn dir="right" off className="mr-[16px]" /></div>
          </div>
        </div>
      </div>

      {/* annotation arrow */}
      <svg className="pointer-events-none absolute left-0 top-0" width="1122" height="797" fill="none" stroke="#dc1d30" strokeLinecap="round" strokeLinejoin="round">
        <path strokeWidth="6.400" d="M104 108L104 125L105 141L107 152L113 173L119 191L126 209L134 227L143 247L150 264L161 286L173 307L189 330L197 343L205 363L212 377L223 391L234 407L241 420L252 437L270 460L290 486L309 508L335 538L362 560L380 572L410 590L425 600L440 608L460 618L468 622L480 631L493 638L508 647L520 653L533 657L552 664L566 676L580 686L597 693L612 695L623 699L632 705L648 714L663 721L682 722L690 724" />
        <path strokeWidth="6.400" d="M679 715L692 724L678 729" />
        <path fill="#dc1d30" stroke="none" d="M680 715L692 724L679 730L683 723z" />
      </svg>
    </div>
  );
}
